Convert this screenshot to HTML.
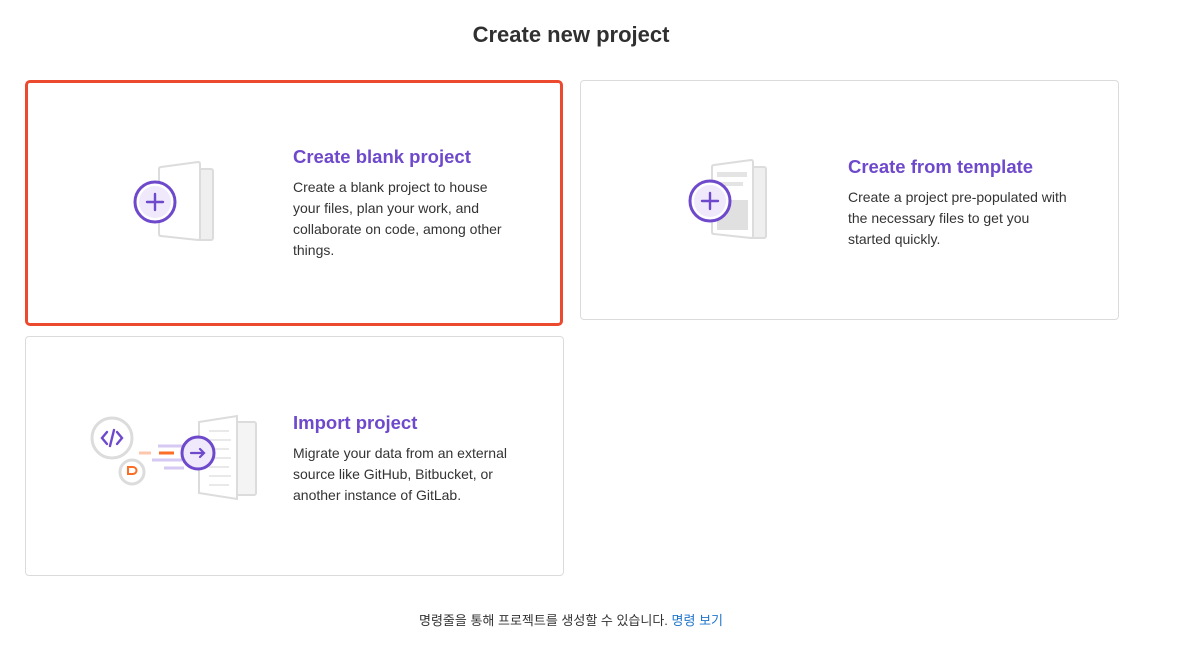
<!DOCTYPE html>
<html><head><meta charset="utf-8"><style>
body{margin:0;background:#fff;font-family:"Liberation Sans","Noto Sans CJK KR",sans-serif;width:1180px;height:663px;position:relative;overflow:hidden;color:#333}
h1{position:absolute;top:22px;left:0;width:1142px;text-align:center;margin:0;font-size:22px;font-weight:bold;color:#303030}
.card{position:absolute;border:1px solid #dbdbdb;border-radius:4px;box-sizing:border-box;background:#fff}
.sel{border:3px solid #ec4a2e;border-radius:5px}
.txt{position:absolute;width:222px}
.t{color:#6e49cb;font-weight:bold;font-size:18.5px;margin-bottom:9px;white-space:nowrap}
.d{font-size:14px;line-height:21px;color:#333}
svg{position:absolute}
.foot{position:absolute;top:610px;left:0;width:1142px;text-align:center;font-size:13px;color:#333}
.foot span{color:#1f75cb}
</style></head><body>
<h1>Create new project</h1>

<div class="card sel" style="left:25px;top:80px;width:538px;height:246px">
<svg style="left:100px;top:75px" width="120" height="90" viewBox="0 0 120 90">
<rect x="70" y="11" width="15" height="71" rx="2" fill="#efefef" stroke="#dcdcdc" stroke-width="2"/>
<path d="M33 9 L70 4 Q72 4 72 6 L72 80 Q72 82 70 82 L33 78 Q31 78 31 76 L31 11 Q31 9 33 9Z" fill="#fff" stroke="#dcdcdc" stroke-width="2"/>
<circle cx="27" cy="44" r="20" fill="#fff" stroke="#6e49cb" stroke-width="3"/>
<circle cx="27" cy="44" r="16" fill="#efe9fb"/>
<path d="M27 36v16M19 44h16" stroke="#6e49cb" stroke-width="2.4" stroke-linecap="round"/>
</svg>
<div class="txt" style="left:265px;top:63px"><div class="t">Create blank project</div><div class="d">Create a blank project to house your files, plan your work, and collaborate on code, among other things.</div></div>
</div>

<div class="card" style="left:580px;top:80px;width:539px;height:240px">
<svg style="left:100px;top:75px" width="120" height="90" viewBox="0 0 120 90">
<rect x="70" y="11" width="15" height="71" rx="2" fill="#efefef" stroke="#dcdcdc" stroke-width="2"/>
<path d="M33 9 L70 4 Q72 4 72 6 L72 80 Q72 82 70 82 L33 78 Q31 78 31 76 L31 11 Q31 9 33 9Z" fill="#fff" stroke="#dcdcdc" stroke-width="2"/>
<rect x="36" y="16" width="30" height="5" fill="#e4e4e4"/><rect x="36" y="26" width="26" height="4" fill="#e4e4e4"/><rect x="36" y="44" width="31" height="30" fill="#e0e0e0"/>
<circle cx="29" cy="45" r="20" fill="#fff" stroke="#6e49cb" stroke-width="3"/>
<circle cx="29" cy="45" r="16" fill="#efe9fb"/>
<path d="M29 37v16M21 45h16" stroke="#6e49cb" stroke-width="2.4" stroke-linecap="round"/>
</svg>
<div class="txt" style="left:267px;top:75px"><div class="t">Create from template</div><div class="d">Create a project pre-populated with the necessary files to get you started quickly.</div></div>
</div>

<div class="card" style="left:25px;top:336px;width:539px;height:240px">
<svg style="left:55px;top:70px" width="190" height="100" viewBox="0 0 190 100">
<rect x="155" y="15" width="20" height="73" rx="2" fill="#f4f4f4" stroke="#dcdcdc" stroke-width="2"/>
<path d="M118 15 L156 9 L156 92 L118 86Z" fill="#fff" stroke="#dcdcdc" stroke-width="2"/>
<g stroke="#e2e2e2" stroke-width="1.5"><path d="M128 24h20M128 33h22M128 42h20M128 51h22M128 60h20M128 69h22M128 78h20"/></g>
<circle cx="31" cy="31" r="20" fill="#fff" stroke="#dcdcdc" stroke-width="3"/>
<circle cx="51" cy="65" r="12" fill="#fff" stroke="#dcdcdc" stroke-width="3"/>
<path d="M26 25l-5 6 5 6M36 25l5 6-5 6M33 23l-4 16" stroke="#6e49cb" stroke-width="2.4" fill="none" stroke-linecap="round"/>
<path d="M47 60h5a3 3 0 0 1 0 7h-5z" stroke="#fc6d26" stroke-width="2" fill="none"/>
<path d="M58 46h12" stroke="#fcc7ad" stroke-width="3"/><path d="M78 46h15" stroke="#fc6d26" stroke-width="3"/>
<path d="M77 39h25M71 53h30M83 61h20" stroke="#d6c9f3" stroke-width="3"/>
<circle cx="117" cy="46" r="16" fill="#efe9fb" stroke="#6e49cb" stroke-width="3"/>
<path d="M110 46h13M119 42l4 4-4 4" stroke="#6e49cb" stroke-width="2.2" fill="none" stroke-linecap="round"/>
</svg>
<div class="txt" style="left:267px;top:75px"><div class="t">Import project</div><div class="d">Migrate your data from an external source like GitHub, Bitbucket, or another instance of GitLab.</div></div>
</div>

<div class="foot">명령줄을 통해 프로젝트를 생성할 수 있습니다. <span>명령 보기</span></div>
</body></html>
